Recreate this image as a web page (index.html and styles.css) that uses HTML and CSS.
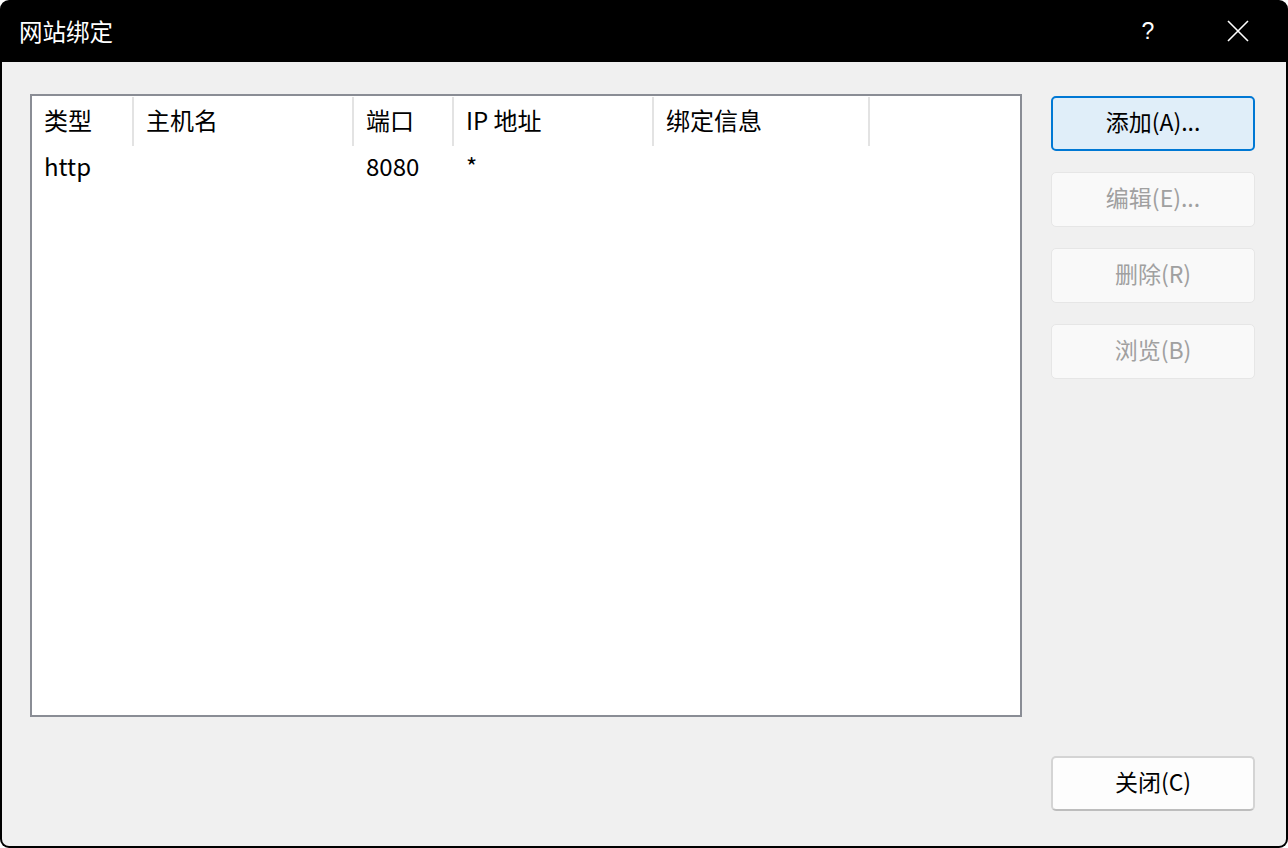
FILE: index.html
```html
<!DOCTYPE html>
<html>
    <head>
        <meta http-equiv="Content-Type" content="text/html; charset=UTF-8">
        <title>网站绑定</title>
        <link rel="stylesheet" href="styles.css">
    </head>
    <body>
        <section class="window">
            <header class="titlebar">
                <span class="title">网站绑定</span>
                <span class="tb-help">?</span>
                <span class="tb-close">
                    <svg width="22" height="22" viewBox="0 0 22 22">
                        <path d="M1 1 L21 21 M21 1 L1 21" stroke="#fff" stroke-width="1.6" fill="none"/>
                    </svg>
                </span>
            </header>
            <div class="content">
                <div class="listview">
                    <div class="lv-row lv-head">
                        <div class="lv-cell">类型</div>
                        <div class="lv-cell">主机名</div>
                        <div class="lv-cell">端口</div>
                        <div class="lv-cell">IP 地址</div>
                        <div class="lv-cell">绑定信息</div>
                        <div class="lv-cell lv-last"></div>
                    </div>
                    <div class="lv-row lv-item">
                        <div class="lv-cell">http</div>
                        <div class="lv-cell"></div>
                        <div class="lv-cell">8080</div>
                        <div class="lv-cell">*</div>
                        <div class="lv-cell"></div>
                        <div class="lv-cell lv-last"></div>
                    </div>
                </div>
                <div class="side">
                    <span class="btn btn-default">添加(A)...</span>
                    <span class="btn btn-disabled">编辑(E)...</span>
                    <span class="btn btn-disabled">删除(R)</span>
                    <span class="btn btn-disabled">浏览(B)</span>
                    <span class="btn btn-close">关闭(C)</span>
                </div>
            </div>
        </section>
    </body>
</html>
```

FILE: styles.css
```css
body {
    margin: 0;
    background: #fff;
    font-family: "Noto Sans CJK SC", "Noto Sans", sans-serif;
}
.window {
    width: 1288px;
    height: 848px;
    background: #000;
    border-radius: 9px;
    overflow: hidden;
    display: flex;
    flex-direction: column;
}
.titlebar {
    height: 62px;
    display: flex;
    align-items: center;
    color: #fff;
    flex-shrink: 0;
}
.title {
    font-size: 23.5px;
    padding-left: 19px;
    flex: 1;
}
.tb-help {
    font-family: "Liberation Sans", sans-serif;
    font-size: 23px;
    width: 40px;
    text-align: center;
    margin-right: 59px;
}
.tb-close {
    width: 22px;
    height: 22px;
    margin-right: 39px;
    display: flex;
}
.content {
    flex: 1;
    margin: 0 2px 2px 2px;
    background: #f0f0f0;
    border-radius: 0 0 7px 7px;
    display: flex;
    gap: 29px;
    padding: 32px 31px 35px 28px;
}
.listview {
    width: 992px;
    height: 623px;
    box-sizing: border-box;
    border: 2px solid #8a8d95;
    background: #fff;
    flex-shrink: 0;
}
.lv-row {
    display: grid;
    grid-template-columns: 102px 220px 100px 200px 216px 1fr;
    font-size: 24px;
    color: #000;
}
.lv-head {
    height: 49px;
    margin-top: 1px;
}
.lv-head .lv-cell {
    border-right: 2px solid #e3e3e3;
    line-height: 45px;
}
.lv-head .lv-last {
    border-right: none;
}
.lv-cell {
    padding-left: 12px;
    white-space: nowrap;
}
.lv-item {
    height: 42px;
    line-height: 40px;
}
.side {
    flex: 1;
    display: flex;
    flex-direction: column;
    gap: 21px;
    padding-top: 2px;
}
.btn {
    height: 55px;
    box-sizing: border-box;
    display: flex;
    align-items: center;
    justify-content: center;
    font-size: 23px;
    border-radius: 5px;
    padding-bottom: 5px;
}
.btn-default {
    background: #e0eef9;
    border: 2px solid #0078d4;
    color: #000;
}
.btn-disabled {
    background: #f9f9f9;
    border: 1px solid #e6e6e6;
    color: #a0a0a0;
}
.btn-close {
    margin-top: auto;
    background: #fdfdfd;
    border: 2px solid #d4d4d4;
    border-bottom-color: #bdbdbd;
    color: #000;
}
```
